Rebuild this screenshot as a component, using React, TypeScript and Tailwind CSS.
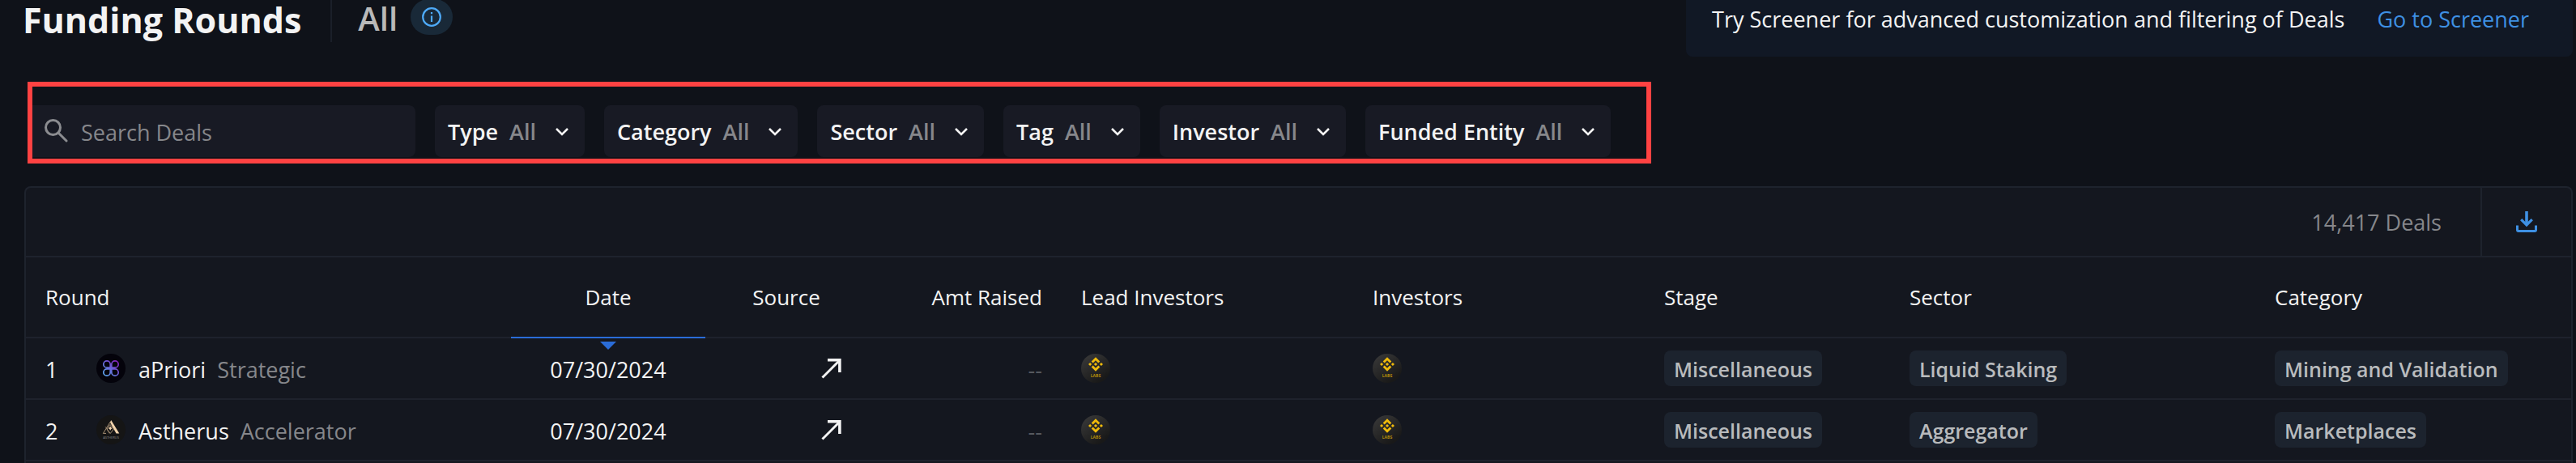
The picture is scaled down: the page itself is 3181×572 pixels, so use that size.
import React, { useState } from "react";

const filters = ["Type", "Category", "Sector", "Tag", "Investor", "Funded Entity"];

type Deal = {
  name: string;
  round: string;
  date: string;
  stage: string;
  sector: string;
  category: string;
  Logo: () => React.ReactElement;
};

function AprioriLogo() {
  return (
    <svg viewBox="0 0 36 36" className="size-9 shrink-0" aria-hidden="true">
      <defs>
        <linearGradient id="apriori" gradientUnits="userSpaceOnUse" x1="8" y1="28" x2="28" y2="8">
          <stop offset="0" stopColor="#5cb8f5" />
          <stop offset="0.5" stopColor="#6a63d8" />
          <stop offset="1" stopColor="#8a12b4" />
        </linearGradient>
      </defs>
      <circle cx="18" cy="18" r="18" fill="#04030b" />
      <g fill="none" stroke="url(#apriori)" strokeWidth="1.7">
        <path d="M17.2 17.2h-4.2a4.2 4.2 0 1 1 4.2-4.2z" />
        <path d="M18.8 17.2h4.2a4.2 4.2 0 1 0-4.2-4.2z" />
        <path d="M17.2 18.8h-4.2a4.2 4.2 0 1 0 4.2 4.2z" />
        <path d="M18.8 18.8h4.2a4.2 4.2 0 1 1-4.2 4.2z" />
      </g>
    </svg>
  );
}

function AstherusLogo() {
  return (
    <svg viewBox="0 0 36 36" className="size-9 shrink-0" aria-hidden="true">
      <circle cx="18" cy="18" r="18" fill="#151515" />
      <path d="M18.2 6 28.3 22.6h-3.8L17 9z" fill="#f2d3ab" />
      <g fill="none" stroke="#c9ad8b" strokeWidth="0.8">
        <path d="M17.6 7.5 8.4 22.4h3.6" />
        <path d="M17 11.500 21.500 17 17.200 22.500 13 17z" />
        <path d="M11 14 16 22.500" strokeOpacity="0.6" />
      </g>
      <path d="m17.200 13.500 1 1.700 1.700.8-1.700.9-1 1.800-1-1.800-1.700-.9 1.700-.8z" fill="#f2d3ab" />
      <text x="18" y="28.6" fontSize="4" textAnchor="middle" fill="#8f8f8f" fontFamily="Open Sans, sans-serif">
        ASTHERUS
      </text>
    </svg>
  );
}

function LabsLogo({ id }: { id: string }) {
  return (
    <svg viewBox="0 0 36 36" className="size-9 shrink-0" role="img" aria-label="Binance Labs">
      <defs>
        <linearGradient id={id} x1="0.1" y1="0.1" x2="0.7" y2="0.9">
          <stop offset="0" stopColor="#373737" />
          <stop offset="1" stopColor="#191919" />
        </linearGradient>
      </defs>
      <circle cx="18" cy="18" r="18" fill={`url(#${id})`} />
      <g fill="#f0bb0b">
        <path d="m18 4.2 5.3 5.3-2 2L18 8.200l-3.300 3.300-2-2z" />
        <path d="m18 21.800-5.300-5.300 2-2 3.300 3.300 3.300-3.300 2 2z" />
        <path d="m18 10.900 2.100 2.100-2.100 2.100-2.100-2.100z" />
        <path d="m11.100 10.900 2.100 2.100-2.100 2.100L9 13z" />
        <path d="m24.900 10.900 2.100 2.100-2.100 2.100-2.100-2.100z" />
      </g>
      <text x="18" y="28.6" fontSize="5" fontWeight="700" textAnchor="middle" fill="#b58d0a" fontFamily="Open Sans, sans-serif">
        LABS
      </text>
    </svg>
  );
}

const deals: Deal[] = [
  { name: "aPriori", round: "Strategic", date: "07/30/2024", stage: "Miscellaneous", sector: "Liquid Staking", category: "Mining and Validation", Logo: AprioriLogo },
  { name: "Astherus", round: "Accelerator", date: "07/30/2024", stage: "Miscellaneous", sector: "Aggregator", category: "Marketplaces", Logo: AstherusLogo },
];

function Tag({ children }: { children: React.ReactNode }) {
  return (
    <span className="inline-flex h-11 items-center rounded-lg bg-[#1c232e] px-3 pt-0.5 align-middle text-[25px] font-semibold text-[#b9bbbd]">
      {children}
    </span>
  );
}

export default function App() {
  const [query, setQuery] = useState("");
  const cell = "border-b-2 border-[#1e222c] px-6 py-0";
  const textCell = "border-b-2 border-[#1e222c] px-6 pb-0 pt-[3px]";

  return (
    <main className="flex min-h-screen flex-col overflow-hidden bg-[#0f1219] font-['Open_Sans','Noto_Sans',sans-serif] text-[27px] leading-9 text-[#f3f3f3]">
      <header className="flex items-start justify-between pl-7 pr-1">
        <div className="flex items-start">
          <h1 className="text-[43px] font-bold leading-[50px]">Funding Rounds</h1>
          <div className="ml-9 h-[52px] w-0.5 bg-[#1a1f29]" />
          <span className="ml-8 text-[40px] font-semibold leading-[46px] text-[#b9b9b9]">All</span>
          <button aria-label="About funding rounds" className="-mt-px ml-4 flex h-11 w-[52px] items-center justify-center rounded-full bg-[#192938]">
            <svg viewBox="0 0 24 24" className="size-6" fill="none" stroke="#4eaaf8" strokeWidth="2.200">
              <circle cx="12" cy="12" r="10.800" />
              <path d="M12 10.500v7.500M12 6v2.300" />
            </svg>
          </button>
        </div>
        <div className="flex h-[70px] items-start gap-10 rounded-b-lg bg-[#111825] pl-8 pr-[54px] pt-1.5">
          <p>Try Screener for advanced customization and filtering of Deals</p>
          <a href="#screener" className="font-medium text-[#3e90e3]">Go to Screener</a>
        </div>
      </header>

      <div className="ml-[34px] mt-[31px] flex w-fit gap-6 border-[6px] border-[#ff4242] pb-0.5 pr-11 pt-[23px]">
        <label className="flex h-16 w-[473px] items-center gap-4 rounded-r-lg bg-[#181a24] pl-3.5">
          <svg viewBox="0 0 30 30" className="size-[30px] shrink-0" fill="none" stroke="#8b8c90" strokeWidth="3" strokeLinecap="round">
            <circle cx="11.500" cy="10.500" r="9" />
            <path d="m18 17 10 10" />
          </svg>
          <input
            aria-label="Search Deals"
            value={query}
            onChange={(e) => setQuery(e.target.value)}
            placeholder="Search Deals"
            className="min-w-0 flex-1 bg-transparent pt-[3px] font-medium outline-none placeholder:text-[#86878b]"
          />
        </label>
        {filters.map((name) => (
          <button key={name} className="flex h-16 items-center rounded-lg bg-[#181a24] pl-4 pr-5 pt-0.5 font-semibold">
            {name}
            <span className="ml-3.5 text-[#86878b]">All</span>
            <svg viewBox="0 0 16 10" className="ml-6 w-4" fill="none" stroke="#f3f3f3" strokeWidth="2.600" aria-hidden="true">
              <path d="m1 1 7 7 7-7" />
            </svg>
          </button>
        ))}
      </div>

      <section className="ml-[30px] mr-1 mt-7 flex-1 rounded-t-lg border-x-2 border-t-2 border-[#1e232d] bg-[#14171f]">
        <div className="flex h-[86px] items-stretch justify-end border-b-2 border-[#1e232d]">
          <p className="flex items-center pr-12 pt-0.5 text-[#86878b]">14,417 Deals</p>
          <button aria-label="Download deals" className="flex w-28 items-center justify-center border-l-2 border-[#1e232d]">
            <svg viewBox="0 0 26 26" className="size-[26px]" fill="none" stroke="#3e90e3">
              <path d="M13 0v16" strokeWidth="3.600" />
              <path d="M6.200 10.200 13 17l6.800-6.800" strokeWidth="3.200" />
              <path d="M1.500 17.500v5.500a1.500 1.500 0 0 0 1.500 1.500h20a1.500 1.500 0 0 0 1.500-1.500v-5.500" strokeWidth="3" />
            </svg>
          </button>
        </div>
        <table className="w-full table-fixed border-separate border-spacing-0 text-left">
          <colgroup>
            <col className="w-[599px]" />
            <col className="w-[240px]" />
            <col className="w-[200px]" />
            <col className="w-[240px]" />
            <col className="w-[360px]" />
            <col className="w-[360px]" />
            <col className="w-[303px]" />
            <col className="w-[451px]" />
            <col />
          </colgroup>
          <thead className="text-[26px]">
            <tr className="h-[100px] *:font-normal">
              <th className={cell}>Round</th>
              <th aria-sort="descending" className="relative border-b-2 border-[#2a6cd8] px-6 py-0 text-center">
                Date
                <svg viewBox="0 0 20 10" className="absolute -bottom-4 left-1/2 w-5 -translate-x-1/2" aria-hidden="true">
                  <path d="M0 0h20L10 10z" fill="#2a6cd8" />
                </svg>
              </th>
              <th className={`${cell} text-center`}>Source</th>
              <th className={`${cell} text-right`}>Amt Raised</th>
              <th className={cell}>Lead Investors</th>
              <th className={cell}>Investors</th>
              <th className={cell}>Stage</th>
              <th className={cell}>Sector</th>
              <th className={cell}>Category</th>
            </tr>
          </thead>
          <tbody>
            {deals.map((deal, i) => (
              <tr key={deal.name} className="h-[76px]">
                <td className={cell}>
                  <div className="flex items-center">
                    <span className="w-[63px] pt-[3px]">{i + 1}</span>
                    <deal.Logo />
                    <span className="ml-4 pt-[3px]">{deal.name}</span>
                    <span className="ml-3.5 pt-[3px] text-[#86878b]">{deal.round}</span>
                  </div>
                </td>
                <td className={`${textCell} text-center`}>{deal.date}</td>
                <td className={cell}>
                  <a href="#source" aria-label={`Source for ${deal.name}`} className="ml-auto block w-10">
                    <svg viewBox="0 0 40 40" className="size-10" fill="none" stroke="#f3f3f3">
                      <path d="M8.500 31.500 30 10" strokeWidth="3" />
                      <path d="M15 9.800h14.900V25" strokeWidth="3.600" />
                    </svg>
                  </a>
                </td>
                <td className={`${textCell} text-right text-[#56595f]`}>--</td>
                <td className={cell}><LabsLogo id={`lead-${i}`} /></td>
                <td className={cell}><LabsLogo id={`investor-${i}`} /></td>
                <td className={cell}><Tag>{deal.stage}</Tag></td>
                <td className={cell}><Tag>{deal.sector}</Tag></td>
                <td className={cell}><Tag>{deal.category}</Tag></td>
              </tr>
            ))}
          </tbody>
        </table>
      </section>
    </main>
  );
}
